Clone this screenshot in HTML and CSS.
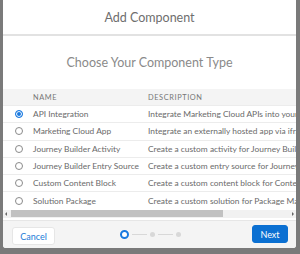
FILE: index.html
```html
<!DOCTYPE html>
<html>
<head>
<meta charset="utf-8">
<link rel="stylesheet" href="styles.css">
</head>
<body>
<div class="modal">
  <div class="modal-header">Add Component</div>
  <div class="modal-body">
    <div class="title">Choose Your Component Type</div>
    <div class="table-wrap">
      <div class="row head">
        <div class="c-radio"></div>
        <div class="c-name">NAME</div>
        <div class="c-desc">DESCRIPTION</div>
      </div>
      <div class="row">
        <div class="c-radio"><span class="radio checked"></span></div>
        <div class="c-name">API Integration</div>
        <div class="c-desc">Integrate Marketing Cloud APIs into your application</div>
      </div>
      <div class="row">
        <div class="c-radio"><span class="radio"></span></div>
        <div class="c-name">Marketing Cloud App</div>
        <div class="c-desc">Integrate an externally hosted app via iframe</div>
      </div>
      <div class="row">
        <div class="c-radio"><span class="radio"></span></div>
        <div class="c-name">Journey Builder Activity</div>
        <div class="c-desc">Create a custom activity for Journey Builder</div>
      </div>
      <div class="row">
        <div class="c-radio"><span class="radio"></span></div>
        <div class="c-name">Journey Builder Entry Source</div>
        <div class="c-desc">Create a custom entry source for Journey Builder</div>
      </div>
      <div class="row">
        <div class="c-radio"><span class="radio"></span></div>
        <div class="c-name">Custom Content Block</div>
        <div class="c-desc">Create a custom content block for Content Builder</div>
      </div>
      <div class="row">
        <div class="c-radio"><span class="radio"></span></div>
        <div class="c-name">Solution Package</div>
        <div class="c-desc">Create a custom solution for Package Manager</div>
      </div>
    </div>
    <div class="scrollbar">
      <span class="arrow left"></span>
      <div class="track"><div class="thumb"></div></div>
      <span class="arrow right"></span>
    </div>
  </div>
  <div class="modal-footer">
    <div class="f-left"><button class="btn cancel">Cancel</button></div>
    <div class="progress">
      <span class="step active"></span>
      <span class="bar"></span>
      <span class="step"></span>
      <span class="bar"></span>
      <span class="step"></span>
    </div>
    <div class="f-right"><button class="btn next">Next</button></div>
  </div>
</div>
</body>
</html>
```

FILE: styles.css
```css
html, body {
  margin: 0;
  padding: 0;
}
body {
  width: 300px;
  height: 254px;
  overflow: hidden;
  background: #7a7a7a;
  font-family: Lato, "Liberation Sans", sans-serif;
}
.modal {
  margin-left: 3px;
  width: 293px;
  height: 248px;
  background: #fff;
  display: flex;
  flex-direction: column;
  border-radius: 0 0 3px 3px;
  overflow: hidden;
}
.modal-header {
  height: 34px;
  border-bottom: 2px solid #e2e2e2;
  display: flex;
  align-items: center;
  justify-content: center;
  font-size: 12.5px;
  color: #6e6e6e;
}
.modal-body {
  display: flex;
  flex-direction: column;
}
.title {
  height: 53px;
  display: flex;
  align-items: center;
  justify-content: center;
  font-size: 12.5px;
  color: #8a8a8a;
}
.table-wrap {
  overflow: hidden;
  white-space: nowrap;
}
.row {
  display: flex;
  align-items: center;
  height: 17.3px;
  border-top: 1px solid #ececec;
  box-sizing: border-box;
  font-size: 8.4px;
  color: #6a6a6a;
}
.row.head {
  height: 16px;
  border-top: none;
  background: #f4f4f4;
  font-size: 7.4px;
  letter-spacing: 0.6px;
  color: #777;
}
.c-radio {
  width: 30px;
  flex: none;
  display: flex;
  justify-content: center;
  padding-left: 2px;
  box-sizing: border-box;
}
.c-name {
  width: 115px;
  flex: none;
}
.c-desc {
  flex: none;
}
.radio {
  width: 6px;
  height: 6px;
  border: 1px solid #8a8a8a;
  border-radius: 50%;
  display: block;
  box-sizing: content-box;
}
.radio.checked {
  border-color: #1a7ae0;
  background: #1a7ae0;
  box-shadow: inset 0 0 0 1px #fff;
}
.scrollbar {
  height: 8px;
  display: flex;
  align-items: center;
  background: #f1f1f1;
  margin-top: 1px;
}
.track {
  flex: 1;
  height: 8px;
  display: flex;
  align-items: center;
}
.thumb {
  width: 212px;
  height: 7px;
  background: #c1c1c1;
}
.arrow {
  width: 8px;
  height: 8px;
  position: relative;
  flex: none;
}
.arrow.left::after,
.arrow.right::after {
  content: "";
  position: absolute;
  top: 2px;
  border-top: 2px solid transparent;
  border-bottom: 2px solid transparent;
}
.arrow.left::after {
  left: 2px;
  border-right: 2px solid #666;
}
.arrow.right::after {
  right: 2px;
  border-left: 2px solid #666;
}
.modal-footer {
  flex: 1;
  margin-top: 2px;
  background: #f4f4f4;
  border-top: 1px solid #e6e6e6;
  display: grid;
  grid-template-columns: 1fr auto 1fr;
  align-items: center;
  padding: 0 8px 0 9px;
}
.f-right {
  display: flex;
  justify-content: flex-end;
}
.btn {
  font-family: inherit;
  font-size: 9px;
  height: 18px;
  border-radius: 3px;
  padding: 0;
  cursor: pointer;
}
.cancel {
  width: 43px;
  background: #fff;
  border: 1px solid #e6e6e6;
  color: #1b7bd8;
}
.next {
  width: 36px;
  background: #0b70d2;
  border: 1px solid #0b70d2;
  color: #fff;
}
.progress {
  display: flex;
  align-items: center;
}
.step {
  width: 5px;
  height: 5px;
  border-radius: 50%;
  background: #d8d8d8;
}
.step.active {
  background: #fff;
  border: 2px solid #1a7ae0;
}
.bar {
  width: 15px;
  height: 1px;
  background: #d8d8d8;
  margin: 0 3px;
}
```
